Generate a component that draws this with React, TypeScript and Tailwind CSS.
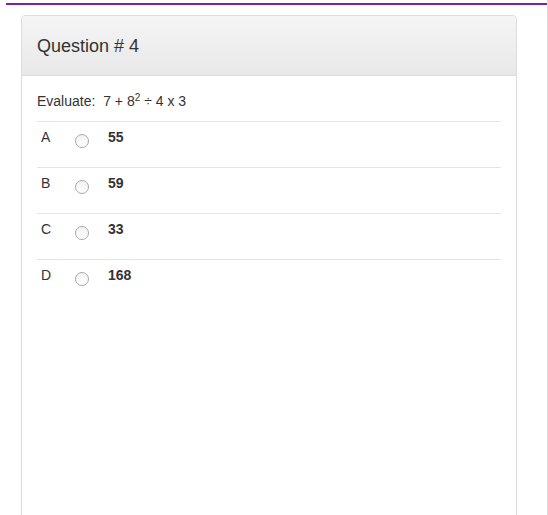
import React from 'react';

const options = [
  { letter: 'A', value: '55' },
  { letter: 'B', value: '59' },
  { letter: 'C', value: '33' },
  { letter: 'D', value: '168' },
];

function Radio() {
  return (
    <span className="inline-block w-[14px] h-[14px] rounded-full border border-[#a9a9a9] bg-gradient-to-b from-[#f2f2f2] to-white" />
  );
}

export default function App() {
  return (
    <div
      className="w-[548px] h-[515px] overflow-hidden bg-white text-[#333] border-r border-[#ddd]"
      style={{ fontFamily: '"Liberation Sans", Arial, sans-serif' }}
    >
      <div className="ml-[6px] mt-[3px] h-[2px] bg-[#7e1f9c]" />
      <div className="ml-[21px] mt-[10px] w-[496px] h-[520px] border border-[#ddd] rounded-t-[4px]">
        <div className="h-[60px] flex items-center px-[15px] border-b border-[#ddd] bg-gradient-to-b from-[#f5f5f5] to-[#e8e8e8] rounded-t-[4px]">
          <h3 className="text-[18px] leading-none pt-[1px]">Question # 4</h3>
        </div>
        <div className="px-[15px] pt-[15px]">
          <div className="text-[14px] leading-[20px] pb-[10px] border-b border-[#e5e5e5]">
            Evaluate:&nbsp; 7 + 8<sup className="text-[10px]">2</sup> ÷ 4 x 3
          </div>
          {options.map((o, i) => (
            <div
              key={o.letter}
              className={`flex items-start h-[46px] pt-[5px] text-[14px] leading-[20px] ${i < options.length - 1 ? 'border-b border-[#e5e5e5]' : ''}`}
            >
              <span className="w-[38px] pl-[4px]">{o.letter}</span>
              <span className="w-[33px] pt-[7px] flex">
                <Radio />
              </span>
              <span className="font-bold">{o.value}</span>
            </div>
          ))}
        </div>
      </div>
    </div>
  );
}
